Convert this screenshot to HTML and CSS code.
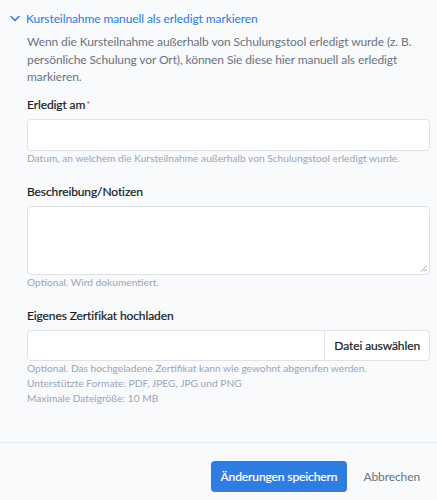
FILE: index.html
```html
<!DOCTYPE html>
<html lang="de">
<head>
<meta charset="utf-8">
<link rel="stylesheet" href="styles.css">
</head>
<body>
<div class="panel">
  <div class="toggle">
    <svg class="chev" width="10" height="7" viewBox="0 0 10 7"><path d="M1 1.5 L5 5.5 L9 1.5" fill="none" stroke="#2b7be0" stroke-width="1.5" stroke-linecap="round" stroke-linejoin="round"/></svg>
    <span class="toggle-text">Kursteilnahme manuell als erledigt markieren</span>
  </div>
  <div class="body">
    <p class="intro">Wenn die Kursteilnahme außerhalb von Schulungstool erledigt wurde (z. B. persönliche Schulung vor Ort), können Sie diese hier manuell als erledigt markieren.</p>

    <div class="field field-first">
      <label class="label">Erledigt am<span class="req">*</span></label>
      <div class="input"></div>
      <div class="hint">Datum, an welchem die Kursteilnahme außerhalb von Schulungstool erledigt wurde.</div>
    </div>

    <div class="field">
      <label class="label">Beschreibung/Notizen</label>
      <div class="textarea">
        <svg class="grip" width="7" height="7" viewBox="0 0 7 7"><path d="M6.5 1 L1 6.5 M6.5 4 L4 6.5" stroke="#8a8f98" stroke-width="0.9"/></svg>
      </div>
      <div class="hint">Optional. Wird dokumentiert.</div>
    </div>

    <div class="field">
      <label class="label">Eigenes Zertifikat hochladen</label>
      <div class="file">
        <div class="file-name"></div>
        <div class="file-btn">Datei auswählen</div>
      </div>
      <div class="hint">Optional. Das hochgeladene Zertifikat kann wie gewohnt abgerufen werden.<br>Unterstützte Formate: PDF, JPEG, JPG und PNG<br>Maximale Dateigröße: 10 MB</div>
    </div>
  </div>
</div>
<div class="footer">
  <button class="btn-primary">Änderungen speichern</button>
  <button class="btn-link">Abbrechen</button>
</div>
</body>
</html>
```
FILE: styles.css
```css
html, body {
  margin: 0;
  padding: 0;
  background: #f8fafc;
  font-family: Lato, "Noto Sans", sans-serif;
  color: #1f2937;
}
.panel {
  padding: 10px 7px 0 10px;
  height: 443px;
  box-sizing: border-box;
  border-bottom: 1px solid #e6e9ee;
}
.toggle {
  display: flex;
  align-items: center;
  gap: 6px;
  height: 17px;
}
.chev { flex: none; }
.toggle-text {
  color: #2b7be0;
  font-size: 12px;
  letter-spacing: -0.1px;
}
.body {
  padding-left: 17px;
}
.intro {
  margin: 6px 0 0;
  font-size: 12px;
  letter-spacing: -0.1px;
  line-height: 17.5px;
  color: #6b7280;
}
.field { margin-top: 17px; }
.field-first { margin-top: 10px; }
.label {
  display: block;
  font-size: 12px;
  letter-spacing: -0.1px;
  line-height: 17px;
  color: #161c26;
  -webkit-text-stroke: 0.2px #161c26;
}
.req { color: #ef4444; font-size: 10px; vertical-align: top; margin-left: 1px; -webkit-text-stroke: 0; }
.input {
  margin-top: 6px;
  height: 32px;
  background: #fff;
  border: 1px solid #dfe3e8;
  border-radius: 4px;
  box-sizing: border-box;
}
.textarea {
  margin-top: 6px;
  height: 69px;
  background: #fff;
  border: 1px solid #dfe3e8;
  border-radius: 4px;
  box-sizing: border-box;
  position: relative;
}
.grip { position: absolute; right: 2px; bottom: 2px; }
.hint {
  margin-top: 0;
  font-size: 10.2px;
  line-height: 15px;
  color: #9ca5b7;
}
.file {
  margin-top: 6px;
  display: flex;
  height: 31px;
  background: #fff;
  border: 1px solid #dfe3e8;
  border-radius: 4px;
  box-sizing: border-box;
}
.file-name { flex: 1; }
.file-btn {
  border-left: 1px solid #dfe3e8;
  padding: 0 9px 0 9px;
  display: flex;
  align-items: center;
  font-size: 12px;
  letter-spacing: -0.1px;
  color: #161c26;
  -webkit-text-stroke: 0.2px #161c26;
}
.footer {
  display: flex;
  justify-content: flex-end;
  align-items: center;
  gap: 16px;
  padding: 18px 17px 0 0;
}
.btn-primary {
  background: #2f7de1;
  color: #fff;
  border: none;
  border-radius: 4px;
  height: 31px;
  padding: 0 10px;
  font-family: inherit;
  font-size: 12px;
  letter-spacing: -0.1px;
  -webkit-text-stroke: 0.2px #fff;
}
.btn-link {
  background: none;
  border: none;
  padding: 0;
  color: #6b7280;
  font-family: inherit;
  font-size: 12px;
  letter-spacing: -0.1px;
}
```
